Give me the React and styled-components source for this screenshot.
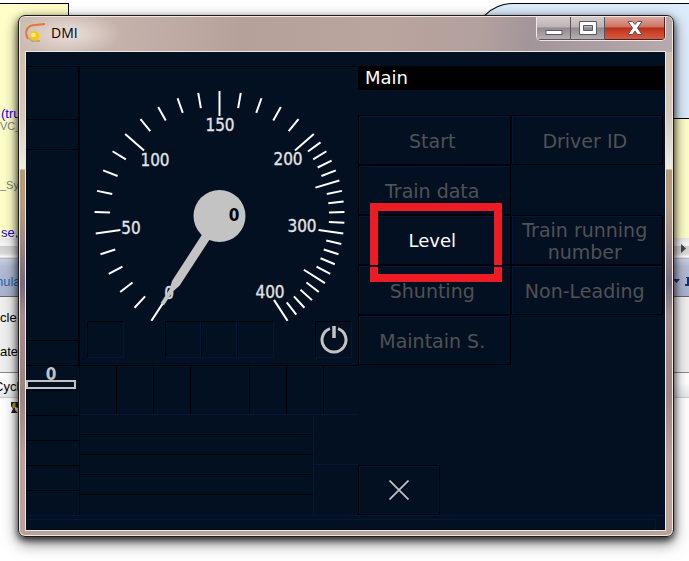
import React from "react";
import styled, { createGlobalStyle, css } from "styled-components";

const navy = "#031021";
const ink = "#000208";
const edge = "#06153a";
const silver = "#c3c3c3";

const GlobalStyle = createGlobalStyle`
  *, *::before, *::after { box-sizing: border-box; }
  body { margin: 0; background: #fff; }
  button { margin: 0; padding: 0; border: 0; background: none; font: inherit; color: inherit; }
`;

const Desktop = styled.div`
  position: relative;
  min-height: 100vh;
  overflow: hidden;
  padding: 15px 15px 22px 18px;
  font-family: "Liberation Sans", Arial, sans-serif;
`;

/* Applications that lie behind the window */
const Backdrop = styled.div`
  position: absolute;
  inset: 0;
  display: flex;
  justify-content: space-between;
  font-size: 13px;
  line-height: 16px;
`;

const Pane = styled.div`
  display: flex;
  flex-direction: column;
  width: ${(p) => p.$width};
  padding-top: 3px;
  white-space: nowrap;
`;

const Note = styled.div`
  height: ${(p) => p.$height};
  padding-top: ${(p) => p.$top || 0};
  background: #ffffca;
  border-top: 1px solid #000;
  border-right: ${(p) => (p.$closed ? "1px solid #000" : "0")};
`;

const StateBox = styled.div`
  height: 115px;
  background: #dcecfd;
  border: 1px solid #000;
  border-width: 1px 0 0 1px;
  border-radius: 40px 0 0 0;
`;

const Code = styled.div`
  color: ${(p) => (p.$muted ? "#808080" : "#1000f0")};
  font-size: ${(p) => (p.$muted ? "11px" : "13px")};
  line-height: ${(p) => (p.$muted ? "10px" : "14px")};
  padding-left: ${(p) => (p.$muted ? 0 : "1px")};
  margin-bottom: ${(p) => p.$gap || 0};
`;

const ScrollStrip = styled.div`
  display: flex;
  align-items: center;
  justify-content: flex-end;
  padding-right: 3px;
  height: 21px;
  background: linear-gradient(#e8e8e8, #fafafa 35%, #d0d0d0 40%, #dcdcdc 75%, #fff 90%, #9ca3b5);
`;

const ToolStrip = styled.div`
  height: 38px;
  padding: 15px 0 0;
  color: #2563b0;
  background: linear-gradient(#c9d2e3, #b4bdd6 20%, #a9b3cf);
  border-bottom: 1px solid #666;
  text-indent: -4px;
  text-align: ${(p) => p.$align || "left"};
`;

const Fields = styled.div`
  display: grid;
  gap: 18px;
  height: 76px;
  padding-top: 13px;
  align-content: start;
  background: #f0f0f0;
  border-bottom: 1px solid #8a8a8a;
`;

const HeadStrip = styled.div`
  height: 25px;
  padding-top: 6px;
  text-indent: -6px;
  background: linear-gradient(#fff 40%, #e6e8ea);
  border-bottom: 1px solid #ccc;
`;

const Marker = styled.svg`
  margin: 3px 0 0 10px;
`;

/* Window */
const Window = styled.section`
  position: relative;
  display: flex;
  flex-direction: column;
  padding: 0 8px 6px 7px;
  border: 1px solid #201c1c;
  border-radius: 7px;
  box-shadow: inset 0 0 0 1px #f2e8e2, 0 3px 7px rgba(0, 0, 0, 0.75), 0 6px 16px rgba(0, 0, 0, 0.5);
  background: linear-gradient(
    #cbb9a8 0, #d5c9ba 100px, #eeeae4 152px, #eae6de 153px, #b29a78 154px, #b39c80 190px,
    #a48c86 220px, #77697a 268px, #a48c8a 300px, #9a8580 380px, #b8a09c 440px, #b9a29c 100%
  );
`;

const TitleBar = styled.header`
  display: flex;
  align-items: flex-start;
  height: 35px;
  margin: 1px -7px 0 -6px;
  padding-left: 5px;
  border-radius: 5px 5px 0 0;
  background:
    radial-gradient(ellipse 52px 22px at 50px 17px, rgba(255, 245, 245, 0.65), transparent),
    linear-gradient(100deg, #cdbdb2 0, #c2aea8 20%, #b6a09a 34%, #baa49e 55%, #b3a19d 70%, #a2959a 78%, #b7aaad 100%);
`;

const AppIcon = styled.svg`
  margin-top: 6px;
`;

const Title = styled.h1`
  flex: 1;
  margin: 6px 0 0 4px;
  font: 400 14px/20px "Open Sans", sans-serif;
  color: #000;
`;

const Controls = styled.div`
  display: flex;
  height: 24px;
  border: 1px solid #f0e8e8;
  border-top: 0;
  border-radius: 0 0 5px 5px;
  overflow: hidden;
  margin-right: 6px;
`;

const ControlButton = styled.button`
  display: grid;
  place-items: center;
  width: ${(p) => (p.$close ? "60px" : "34px")};
  border: 1px solid #5c5458;
  border-width: 0 1px 1px 0;
  background: linear-gradient(#d3cbcb, #bdb4b6 45%, #92888d 50%, #b6aeb0);
  ${(p) =>
    p.$close &&
    css`
      background: linear-gradient(#dba79d, #cf7363 45%, #b5301a 50%, #d2452b 75%, #c85f46);
      border-color: #551f16;
    `}
`;

const Screen = styled.main`
  flex: 1;
  padding-top: 14px;
  background: ${navy};
  box-shadow: 0 0 0 1px #efe6e2;
  font-family: "DejaVu Sans", Verdana, sans-serif;
`;

const Panels = styled.div`
  display: grid;
  grid-template-columns: 54px 278px 1fr;
`;

const Column = styled.div`
  display: flex;
  flex-direction: column;
  min-width: 0;
`;

const SideCell = styled.div`
  flex: 0 0 ${(p) => p.$height};
  border-top: 1px solid ${ink};
  border-right: ${(p) => (p.$bold ? "2px" : "1px")} solid ${ink};
`;

const DistanceCell = styled(SideCell)`
  display: flex;
  flex-direction: column;
  color: ${silver};
  font: 700 17px/16px "DejaVu Sans Condensed", "DejaVu Sans", sans-serif;
  text-align: center;
  padding-right: 3px;
`;

const DistanceBar = styled.div`
  height: 9px;
  flex: none;
  border: 2px solid ${silver};
  margin-top: -2px;
`;

const GaugeArea = styled.div`
  height: 299px;
  border-top: 1px solid ${ink};
`;

const Dial = styled.svg`
  display: block;
  width: 278px;
  height: 254px;
  font-family: "DejaVu Sans Condensed", "DejaVu Sans", sans-serif;
  font-size: 17px;
  text-anchor: middle;
`;

const Indicators = styled.div`
  display: flex;
  justify-content: space-between;
  padding: 0 6px 0 7px;
`;

const Group = styled.div`
  display: flex;
`;

const Lamp = styled.div`
  display: grid;
  place-items: center;
  width: ${(p) => (p.$wide ? "37px" : "36px")};
  height: 37px;
  border: 1px solid ${edge};
  border-top-color: ${ink};
  border-left-color: ${ink};
`;

const SymbolRow = styled.div`
  display: grid;
  grid-template-columns: 37px 37px 37px 59px 37px 37px 1fr;
  height: 50px;
  border-top: 1px solid ${ink};
  border-bottom: 1px solid ${edge};
`;

const SymbolCell = styled.div`
  border-right: 1px solid ${ink};
  &:last-child { border-right: 0; }
`;

const Messages = styled.div`
  display: grid;
  grid-template-columns: 234px 1fr;
  height: 100px;
`;

const MessageList = styled.div`
  display: grid;
  grid-template-rows: repeat(5, 1fr);
  border-right: 1px solid ${edge};
`;

const MessageLine = styled.div`
  border-bottom: 1px solid ${ink};
  &:last-child { border-bottom: 0; }
`;

const Scrollers = styled.div`
  display: grid;
  grid-template-rows: 1fr 1fr;
`;

const Scroller = styled.div`
  border-bottom: 1px solid ${edge};
`;

const MenuTitle = styled.h2`
  height: 24px;
  margin: 0 1px 25px 0;
  padding-left: 7px;
  background: #000;
  color: #fff;
  font-weight: 400;
  font-size: 18px;
  line-height: 24px;
`;

const MenuGrid = styled.div`
  display: grid;
  grid-template-columns: 1fr 1fr;
  grid-auto-rows: 50px;
  margin-right: 2px;
`;

const Slot = styled.div`
  position: relative;
  display: grid;
`;

const MenuButton = styled.button`
  min-width: 0;
  border: 1px solid ${ink};
  box-shadow: inset 1px 1px 0 ${edge};
  color: ${(p) => (p.$active ? "#fff" : "#505254")};
  font-size: ${(p) => (p.$active ? "18px" : "19px")};
  line-height: 22px;
  padding: 2px 4px 0 0;
`;

const Highlight = styled.div`
  position: absolute;
  inset: -12px 9px -17px 12px;
  border: 8px solid #ed1c24;
  pointer-events: none;
`;

const CloseMenu = styled(MenuButton)`
  display: grid;
  place-items: center;
  width: 82px;
  height: 50px;
  margin-top: auto;
  padding: 0;
`;

const Footer = styled.footer`
  height: 15px;
  padding: 3px 9px 0 0;
  border-top: 1px solid ${edge};
`;

const FooterBox = styled.div`
  height: 11px;
  border: 1px solid ${edge};
  border-width: 1px 1px 0 0;
`;

const MAJOR = new Set([0, 50, 100, 150, 200, 250, 300, 350, 400]);
/* The upper half of the scale is compressed to half the angle per km/h */
const SPEEDS = Array.from({ length: 41 }, (_, i) => i * 10);
const angleOf = (v) => (v <= 200 ? -147 + v * 0.98 : 49 + (v - 200) * 0.49);
const LABELS = [
  [0, 89, 232],
  [50, 51, 167],
  [100, 75, 99],
  [150, 140, 64],
  [200, 208, 98],
  [300, 222, 165],
  [400, 190, 231],
];

function Speedometer() {
  return (
    <Dial viewBox="0 0 278 254" role="img" aria-label="Speed 0">
      <g transform="translate(139.5 149)" stroke="#fff" strokeWidth="2">
        {SPEEDS.map((v) => (
          <line key={v} y1={-125} y2={MAJOR.has(v) ? -100 : -109.5} transform={`rotate(${angleOf(v)})`} />
        ))}
      </g>
      {LABELS.map(([v, x, y]) => (
        <text key={v} x={x} y={y} fill="#e2e4e6" stroke="#e2e4e6" strokeWidth="0.3">{v}</text>
      ))}
      <g transform="translate(139.5 149)" fill={silver}>
        <circle r="26" />
        <path d="M-4.5 0H4.5V-80L2-89V-105H-2V-89L-4.5-80Z" transform="rotate(-147)" />
      </g>
      <text x="154" y="154" fill="#000" fontWeight="700">0</text>
    </Dial>
  );
}

const MENU = [
  "Start", "Driver ID",
  "Train data", "",
  "Level", "Train running number",
  "Shunting", "Non-Leading",
  "Maintain S.",
];

export default function App() {
  return (
    <>
      <GlobalStyle />
      <Desktop>
        <Backdrop aria-hidden="true">
          <Pane $width="69px">
            <Note $height="235px" $top="103px" $closed>
              <Code>(true</Code>
              <Code $muted $gap="49px">VC_</Code>
              <Code $muted $gap="36px">_Sy</Code>
              <Code>se,</Code>
            </Note>
            <ScrollStrip />
            <ToolStrip>nula</ToolStrip>
            <Fields>
              <span>cle</span>
              <span>ater</span>
            </Fields>
            <HeadStrip>Cycl</HeadStrip>
            <Marker width="9" height="13" viewBox="0 0 9 13">
              <path d="M1 1H8V7L5 6V9L8 12H1L3 8L1 5Z" fill="#222" />
              <path d="M3 3L5 2V6L3 7ZM5 8L7 11" fill="#9a8a10" stroke="#c8b820" />
            </Marker>
          </Pane>
          <Pane $width="216px">
            <StateBox />
            <Note $height="120px" />
            <ScrollStrip>
              <svg width="5" height="9" viewBox="0 0 5 9"><path d="M0 0L5 4.5L0 9Z" fill="#444" /></svg>
            </ScrollStrip>
            <ToolStrip $align="right">
              <svg width="16" height="9" viewBox="0 0 16 9">
                <path d="M0 2H7L3.5 6Z" fill="#15307c" />
                <path d="M13 0H16M15 0V7M12 8H16" stroke="#15307c" strokeWidth="2" />
              </svg>
            </ToolStrip>
            <Fields />
            <HeadStrip />
          </Pane>
        </Backdrop>

        <Window>
          <TitleBar>
            <AppIcon width="22" height="20" viewBox="0 0 22 20">
              <path d="M3 16C-2 7 4 2 10 2L20 1" fill="none" stroke="#e47636" strokeWidth="2" />
              <path d="M4 15L7 18H15" fill="none" stroke="#c5a48c" strokeWidth="2" />
              <circle cx="9.5" cy="13" r="4.7" fill="#f5c90d" />
              <circle cx="8.5" cy="12" r="2.3" fill="#fff08c" />
            </AppIcon>
            <Title>DMI</Title>
            <Controls>
              <ControlButton aria-label="Minimize">
                <svg width="18" height="16" viewBox="0 0 18 16">
                  <rect x="1" y="10.5" width="16" height="4" fill="#fff" stroke="#565a6c" />
                </svg>
              </ControlButton>
              <ControlButton aria-label="Maximize">
                <svg width="18" height="14" viewBox="0 0 18 14">
                  <path d="M.5.5H17.5V13.5H.5ZM4.5 4.500V9.500H13.5V4.500Z" fill="#fff" fillRule="evenodd" stroke="#565a6c" />
                </svg>
              </ControlButton>
              <ControlButton $close aria-label="Close">
                <svg width="16" height="14" viewBox="0 0 16 14">
                  <path d="M1 .5H5.500L8 3.500L10.500.5H15L10.500 7L15 13.500H10.500L8 10L5.500 13.500H1L5.500 7Z" fill="#fff" stroke="#5b5060" />
                </svg>
              </ControlButton>
            </Controls>
          </TitleBar>

          <Screen>
            <Panels>
              <Column>
                <SideCell $height="53px" $bold />
                <SideCell $height="30px" $bold />
                <SideCell $height="191px" $bold />
                <SideCell $height="25px" $bold />
                <DistanceCell $height="25px">
                  0
                  <DistanceBar />
                </DistanceCell>
                {[0, 1, 2, 3, 4].map((n) => (
                  <SideCell key={n} $height="25px" />
                ))}
              </Column>

              <Column>
                <GaugeArea>
                  <Speedometer />
                  <Indicators>
                    <Lamp $wide />
                    <Group>
                      <Lamp />
                      <Lamp />
                      <Lamp $wide />
                    </Group>
                    <Lamp $wide>
                      <svg width="28" height="28" viewBox="0 0 28 28" fill="none" stroke={silver}>
                        <path d="M10 2.7A12 12 0 1 0 18 2.7" strokeWidth="3" />
                        <path d="M14 0V12" strokeWidth="3.5" />
                      </svg>
                    </Lamp>
                  </Indicators>
                </GaugeArea>
                <SymbolRow>
                  {[0, 1, 2, 3, 4, 5, 6].map((n) => (
                    <SymbolCell key={n} />
                  ))}
                </SymbolRow>
                <Messages>
                  <MessageList>
                    {[0, 1, 2, 3, 4].map((n) => (
                      <MessageLine key={n} />
                    ))}
                  </MessageList>
                  <Scrollers>
                    <Scroller />
                    <div />
                  </Scrollers>
                </Messages>
              </Column>

              <Column>
                <MenuTitle>Main</MenuTitle>
                <MenuGrid>
                  {MENU.map((label, i) => (
                    <Slot key={i}>
                      {label && (
                        <MenuButton $active={label === "Level"} disabled={label !== "Level"}>
                          {label}
                        </MenuButton>
                      )}
                      {label === "Level" && <Highlight />}
                    </Slot>
                  ))}
                </MenuGrid>
                <CloseMenu aria-label="Close menu">
                  <svg width="20" height="20" viewBox="0 0 20 20">
                    <path d="M.5.5L19.5 19.5M19.5.5L.5 19.5" stroke={silver} strokeWidth="1.7" />
                  </svg>
                </CloseMenu>
              </Column>
            </Panels>
            <Footer>
              <FooterBox />
            </Footer>
          </Screen>
        </Window>
      </Desktop>
    </>
  );
}
